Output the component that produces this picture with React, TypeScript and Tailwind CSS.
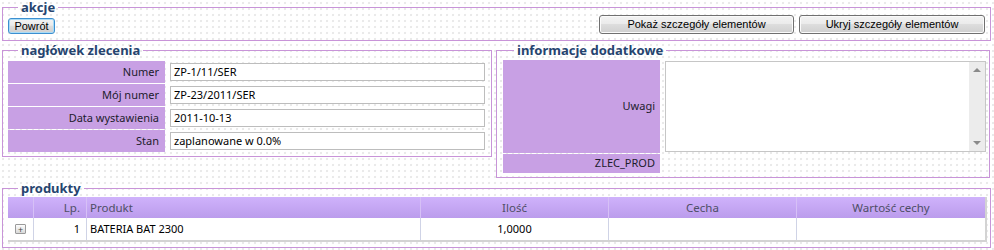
import React from "react";

const legendCls =
  "px-[3px] text-[13px] leading-[15px] font-bold text-[#26446f] [font-family:'Noto_Sans',sans-serif]";

function Btn({ children, w, h, focus }: { children: React.ReactNode; w: string; h: string; focus?: boolean }) {
  return (
    <button
      className={
        "flex items-center justify-center rounded-[3px] border text-[11px] leading-none text-black [font-family:'Liberation_Sans',Arial,sans-serif] bg-[linear-gradient(#f3f3f3,#ebebeb_45%,#dddddd_50%,#cfcfcf)] " +
        (focus
          ? "border-[#3c8fd0] shadow-[inset_0_0_0_1px_#a9dcf7]"
          : "border-[#707070] shadow-[inset_0_0_0_1px_#fbfbfb]") +
        " " +
        w +
        " " +
        h
      }
    >
      {children}
    </button>
  );
}

function Row({ label, value }: { label: string; value: string }) {
  return (
    <div className="flex h-[22px] items-center">
      <div className="flex h-full w-[157px] items-center justify-end bg-[#c8a0e4] pr-[6px] text-[#1c1c2c]">
        {label}
      </div>
      <div className="ml-[5px] flex h-[18px] w-[315px] items-center border border-[#bdbdbd] bg-white pl-[3px] text-black">
        {value}
      </div>
    </div>
  );
}

export default function App() {
  return (
    <div className="h-[250px] w-[994px] overflow-hidden bg-white bg-[radial-gradient(circle,#eaeaea_1px,transparent_1.6px)] [background-size:6px_6px] px-[2px] text-[11px] [font-family:'Noto_Sans',sans-serif]">
      {/* akcje */}
      <fieldset className="w-[989px] border border-[#c894d8] pb-[6px] pl-[5px] pr-[5px]">
        <legend className={legendCls + " ml-[10px]"}>akcje</legend>
        <div className="flex items-end justify-between">
          <Btn w="w-[47px]" h="h-[16px]" focus>
            Powrót
          </Btn>
          <div className="flex gap-[5px]">
            <Btn w="w-[195px]" h="h-[19px]">Pokaż szczegóły elementów</Btn>
            <Btn w="w-[186px]" h="h-[19px]">Ukryj szczegóły elementów</Btn>
          </div>
        </div>
      </fieldset>

      <div className="mt-[2px] flex items-start gap-[4px]">
        {/* naglowek */}
        <fieldset className="w-[490px] border border-[#c894d8] pb-[4px] pl-[5px] pt-[3px]">
          <legend className={legendCls + " ml-[10px]"}>nagłówek zlecenia</legend>
          <div className="flex flex-col gap-px">
            <Row label="Numer" value="ZP-1/11/SER" />
            <Row label="Mój numer" value="ZP-23/2011/SER" />
            <Row label="Data wystawienia" value="2011-10-13" />
            <Row label="Stan" value="zaplanowane w 0.0%" />
          </div>
        </fieldset>

        {/* informacje */}
        <fieldset className="w-[494px] border border-[#c894d8] pb-[4px] pl-[6px] pt-[2px]">
          <legend className={legendCls + " ml-[11px]"}>informacje dodatkowe</legend>
          <div className="flex items-start">
            <div className="flex h-[93px] w-[157px] items-center justify-end bg-[#c8a0e4] pr-[5px] text-[#1c1c2c]">
              Uwagi
            </div>
            <div className="ml-[5px] mt-[1px] flex h-[91px] w-[321px] border border-[#c6c6c6] bg-white">
              <div className="flex-1" />
              <div className="flex w-[16px] flex-col items-center justify-between bg-[#ececec] py-[6px]">
                <div className="h-0 w-0 border-x-[4px] border-b-[4px] border-x-transparent border-b-[#8a8a8a]" />
                <div className="h-0 w-0 border-x-[4px] border-t-[4px] border-x-transparent border-t-[#8a8a8a]" />
              </div>
            </div>
          </div>
          <div className="mt-px flex h-[19px] w-[157px] items-center justify-end bg-[#c8a0e4] pr-[5px] text-[#1c1c2c]">
            ZLEC_PROD
          </div>
        </fieldset>
      </div>

      {/* produkty */}
      <fieldset className="mt-[3px] w-[989px] border border-[#c894d8] pb-[5px] pl-[5px] pt-[1px]">
        <legend className={legendCls + " ml-[10px]"}>produkty</legend>
        <div className="w-[979px] border-b-2 border-r-2 border-[#d3d3d3]">
          <div className="grid h-[21px] grid-cols-[25px_53px_334px_188px_188px_189px] bg-[linear-gradient(#cfb2fb,#bb9cec)] text-[11.5px] text-[#4e4e66]">
            <div />
            <div className="flex items-center justify-end border-l border-[#d6c0f6] pr-[6px]">Lp.</div>
            <div className="flex items-center border-l border-[#d6c0f6] pl-[3px]">Produkt</div>
            <div className="flex items-center justify-center border-l border-[#d6c0f6]">Ilość</div>
            <div className="flex items-center justify-center border-l border-[#d6c0f6]">Cecha</div>
            <div className="flex items-center justify-center border-l border-[#d6c0f6]">Wartość cechy</div>
          </div>
          <div className="grid h-[22px] grid-cols-[25px_53px_334px_188px_188px_189px] bg-white text-black">
            <div className="flex items-center justify-center">
              <div className="flex h-[10px] w-[11px] items-center justify-center rounded-[1px] border border-[#9a9a9a] bg-[linear-gradient(#fdfdfd,#d9d9d9)] text-[9px] leading-none text-[#444]">
                +
              </div>
            </div>
            <div className="flex items-center justify-end border-l border-[#cfd3e6] pr-[6px]">1</div>
            <div className="flex items-center border-l border-[#cfd3e6] pl-[3px]">BATERIA BAT 2300</div>
            <div className="flex items-center justify-center border-l border-[#cfd3e6]">1,0000</div>
            <div className="border-l border-[#cfd3e6]" />
            <div className="border-l border-[#cfd3e6]" />
          </div>
        </div>
      </fieldset>
    </div>
  );
}
